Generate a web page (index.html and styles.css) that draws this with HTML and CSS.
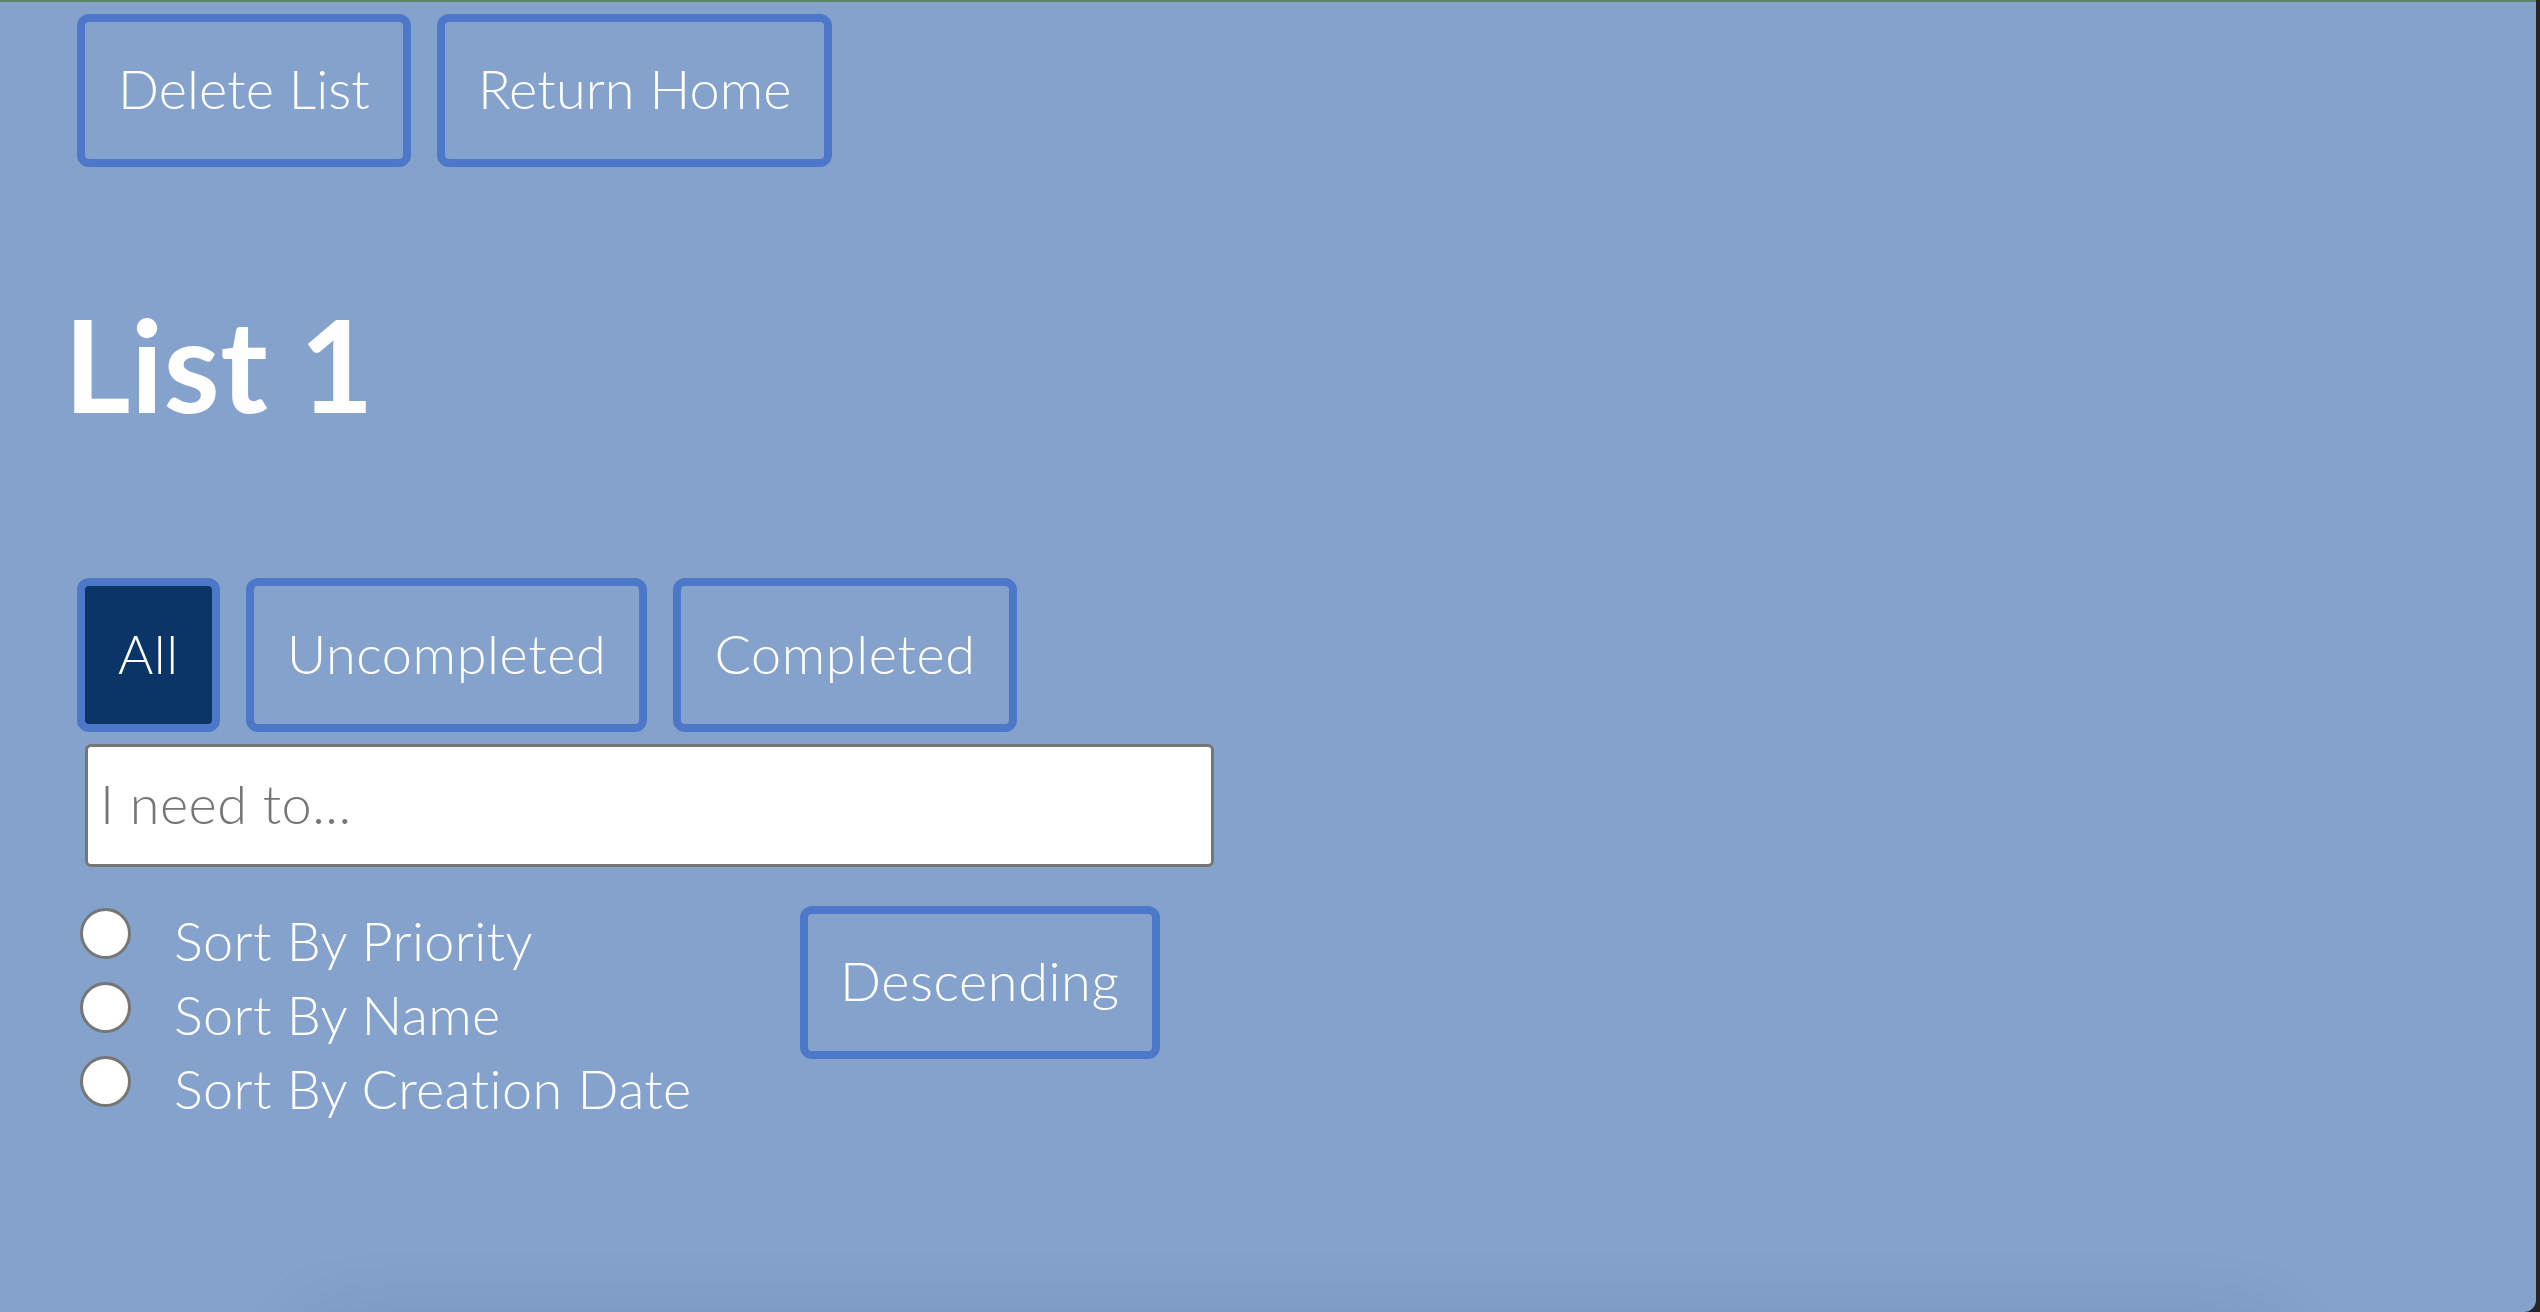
FILE: index.html
```html
<!DOCTYPE html>
<html lang="en">
<head>
<meta charset="utf-8">
<title>List 1</title>
<link rel="stylesheet" href="styles.css">
</head>
<body>
<div class="app">
  <main class="page">
    <div class="top-actions">
      <button class="btn">Delete List</button>
      <button class="btn">Return Home</button>
    </div>
    <h1 class="title">List 1</h1>
    <div class="filters">
      <button class="btn btn-active">All</button>
      <button class="btn">Uncompleted</button>
      <button class="btn">Completed</button>
    </div>
    <input class="todo-input" type="text" placeholder="I need to...">
    <div class="sort">
      <div class="sort-options">
        <label class="sort-option"><input type="radio" name="sort" class="radio"><span>Sort By Priority</span></label>
        <label class="sort-option"><input type="radio" name="sort" class="radio"><span>Sort By Name</span></label>
        <label class="sort-option"><input type="radio" name="sort" class="radio"><span>Sort By Creation Date</span></label>
      </div>
      <button class="btn btn-order">Descending</button>
    </div>
    <section class="list-panel"></section>
  </main>
</div>
</body>
</html>
```

FILE: styles.css
```css
html {
  background: #262626;
}
body {
  margin: 0;
  font-family: "Lato", "Open Sans", sans-serif;
  font-weight: 300;
}
.app {
  height: 1310px;
  margin-right: 4px;
  border-top: 2px solid #5a8462;
  background: #84a2cb;
  border-bottom-right-radius: 12px;
  overflow: hidden;
}
.page {
  padding: 12px 0 0 77px;
}
.top-actions,
.filters {
  display: flex;
  gap: 26px;
}
.btn {
  box-sizing: border-box;
  height: 153px;
  padding: 0 33px 4px;
  border: 8px solid #4d77c8;
  border-radius: 12px;
  background: transparent;
  color: #ffffff;
  font-family: inherit;
  font-size: 54px;
  font-weight: 300;
  letter-spacing: 0.6px;
}
.top-actions .btn {
  letter-spacing: 0.1px;
}
.btn-active {
  background: #0a3566;
}
.title {
  margin: 133px 0 0 -13px;
  font-size: 128px;
  line-height: 128px;
  font-weight: 700;
  letter-spacing: 0.3px;
  color: #ffffff;
}
.filters {
  margin-top: 150px;
}
.filters .btn {
  height: 154px;
}
.todo-input {
  display: block;
  box-sizing: border-box;
  width: 1129px;
  height: 123px;
  margin: 12px 0 0 8px;
  padding: 0 12px 4px;
  border: 3px solid #767676;
  border-radius: 6px;
  background: #ffffff;
  font-family: inherit;
  font-size: 54px;
  font-weight: 300;
  letter-spacing: 0.5px;
  color: #222;
}
.todo-input::placeholder {
  color: #757575;
}
.sort {
  display: flex;
  align-items: flex-start;
  margin-top: 37px;
}
.sort-options {
  width: 723px;
  display: flex;
  flex-direction: column;
}
.sort-option {
  display: flex;
  align-items: flex-start;
  height: 74px;
  line-height: 74px;
  font-size: 54px;
  letter-spacing: 0.35px;
  color: #ffffff;
}
.radio {
  appearance: none;
  -webkit-appearance: none;
  box-sizing: border-box;
  width: 51px;
  height: 51px;
  margin: 4px 43px 0 3px;
  border: 3px solid #767676;
  border-radius: 50%;
  background: #ffffff;
  flex: none;
}
.btn-order {
  margin-top: 2px;
  padding: 0 32px 4px;
}
.list-panel {
  width: 1930px;
  height: 400px;
  margin: 220px 0 0 250px;
  box-shadow: 0 0 80px 10px rgba(20, 40, 80, 0.18);
}
```
